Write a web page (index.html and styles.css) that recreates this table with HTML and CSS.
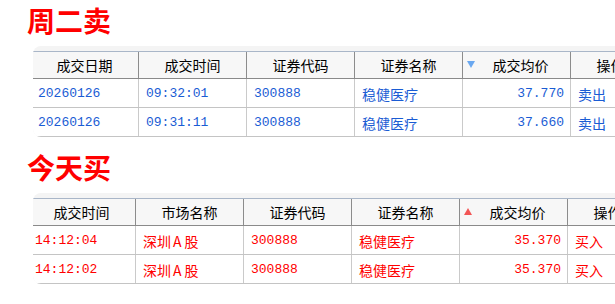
FILE: index.html
```html
<!DOCTYPE html>
<html lang="zh-CN">
<head>
<meta charset="utf-8">
<title>交易记录</title>
<link rel="stylesheet" href="styles.css">
</head>
<body>
<div class="page">
  <h2 class="title">周二卖</h2>
  <div class="wrap">
    <div class="grid grid-sell">
      <div class="row head">
        <div class="hc">成交日期</div>
        <div class="hc">成交时间</div>
        <div class="hc">证券代码</div>
        <div class="hc">证券名称</div>
        <div class="hc sorted"><svg class="arrow" width="8" height="7" viewBox="0 0 8 7"><polygon points="0,0 8,0 4,7" fill="#6aa8f0"/></svg>成交均价</div>
        <div class="hc">操作</div>
      </div>
      <div class="row body sell">
        <div class="c mono">20260126</div>
        <div class="c mono">09:32:01</div>
        <div class="c mono">300888</div>
        <div class="c">稳健医疗</div>
        <div class="c mono num">37.770</div>
        <div class="c">卖出</div>
      </div>
      <div class="row body sell">
        <div class="c mono">20260126</div>
        <div class="c mono">09:31:11</div>
        <div class="c mono">300888</div>
        <div class="c">稳健医疗</div>
        <div class="c mono num">37.660</div>
        <div class="c">卖出</div>
      </div>
    </div>
  </div>

  <h2 class="title title-2">今天买</h2>
  <div class="wrap">
    <div class="grid grid-buy">
      <div class="row head">
        <div class="hc">成交时间</div>
        <div class="hc">市场名称</div>
        <div class="hc">证券代码</div>
        <div class="hc">证券名称</div>
        <div class="hc sorted"><svg class="arrow" width="8" height="7" viewBox="0 0 8 7"><polygon points="4,0 8,7 0,7" fill="#f25555"/></svg>成交均价</div>
        <div class="hc">操作</div>
      </div>
      <div class="row body buy">
        <div class="c mono">14:12:04</div>
        <div class="c">深圳<span class="wide">A</span>股</div>
        <div class="c mono">300888</div>
        <div class="c">稳健医疗</div>
        <div class="c mono num">35.370</div>
        <div class="c">买入</div>
      </div>
      <div class="row body buy">
        <div class="c mono">14:12:02</div>
        <div class="c">深圳<span class="wide">A</span>股</div>
        <div class="c mono">300888</div>
        <div class="c">稳健医疗</div>
        <div class="c mono num">35.370</div>
        <div class="c">买入</div>
      </div>
    </div>
  </div>
</div>
</body>
</html>
```

FILE: styles.css
```css
html, body {
  margin: 0;
  padding: 0;
  background: #ffffff;
  overflow: hidden;
}

.page {
  width: 615px;
  overflow: hidden;
  padding-top: 6px;
  font-family: "Noto Sans CJK SC", "Noto Sans", sans-serif;
}

.title {
  margin: 0 0 0 27px;
  font-family: "Noto Sans CJK SC", sans-serif;
  font-size: 28px;
  line-height: 28px;
  font-weight: 700;
  color: #ff0000;
}

.title-2 {
  margin-top: 16px;
}

.wrap {
  margin: 12px 0 0 33px;
  padding-top: 5px;
  background: #f4f4f4;
  border-radius: 8px 0 0 8px;
  overflow: hidden;
}

.grid {
  width: 620px;
}

.grid-sell {
  margin-left: -2px;
}

.grid-buy {
  margin-left: -5px;
}

.row {
  display: grid;
  grid-template-columns: repeat(5, 108px) 80px;
}

.head {
  background: #f7f7f7;
  border-top: 1px solid #a9b6c8;
  border-bottom: 1px solid #8a8a8a;
  height: 26px;
}

.hc {
  position: relative;
  box-sizing: border-box;
  border-right: 1px solid #8c8c8c;
  text-align: center;
  font-size: 14px;
  line-height: 26px;
  color: #000000;
  white-space: nowrap;
}

.sorted {
  padding-left: 8px;
}

.arrow {
  position: absolute;
  left: 4px;
  top: 9px;
}

.body {
  background: #ffffff;
  border-bottom: 1px solid #c4c4c4;
  height: 28px;
}

.c {
  box-sizing: border-box;
  border-right: 1px solid #cacaca;
  padding: 2px 6px 0 7px;
  font-size: 14px;
  line-height: 26px;
  white-space: nowrap;
  overflow: hidden;
}

.wide {
  padding: 0 3px 0 2px;
}

.mono {
  font-family: "Liberation Mono", "DejaVu Sans Mono", monospace;
  font-size: 13px;
}

.num {
  text-align: right;
}

.sell .c {
  color: #1a5cd4;
}

.buy .c {
  color: #ff0000;
}
```
